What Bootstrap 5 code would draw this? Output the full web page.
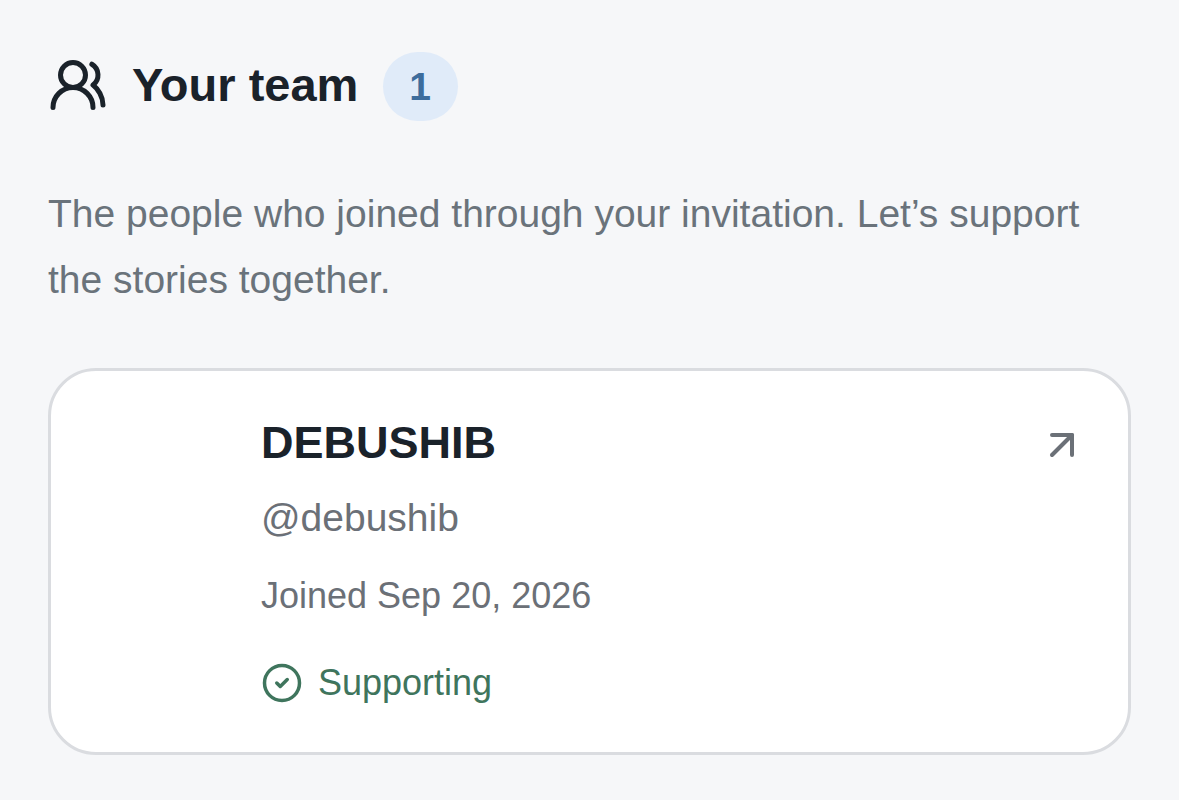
<!DOCTYPE html>
<html lang="en">
<head>
<meta charset="utf-8">
<meta name="viewport" content="width=device-width, initial-scale=1">
<title>Your team</title>
<link href="https://cdn.jsdelivr.net/npm/bootstrap@5.3.0/dist/css/bootstrap.min.css" rel="stylesheet">
<style>
body { background: #f6f7f9; color: #1a222a; font-family: "Liberation Sans", Arial, sans-serif; }
.team { padding: 52px 48px 45px; }
.team-head { gap: 25px; }
.team-title { font-size: 47px; line-height: 64px; font-weight: 700; gap: 24px; padding-bottom: 4px; }
.team-count { background: #e0ebf9; color: #3d6c9c; font-size: 39px; line-height: 39px; padding: 15px 27px 15px 26px; }
.team-intro { color: #6a737b; font-size: 39px; line-height: 66px; margin: 60px 0 55px; }
.member { border: 3px solid #dadce0; border-radius: 48px; padding: 39px 42px 42px 210px; }
.member-name { font-size: 45px; line-height: 66px; font-weight: 700; color: #1a222a; }
.member-handle { font-size: 39px; line-height: 60px; margin-top: 12px; }
.member-date { font-size: 36px; line-height: 54px; margin-top: 21px; }
.member-handle, .member-date, .member-arrow { color: #6b7077; }
.member-status { color: #3f755d; font-size: 36px; line-height: 54px; gap: 15px; margin-top: 33px; }
.member-arrow { margin-top: 11px; }
</style>
</head>
<body>
<main class="team">
  <header class="team-head d-flex align-items-center">
    <h1 class="team-title d-flex align-items-center mb-0">
      <svg width="60" height="60" viewBox="0 0 24 24" fill="none" stroke="currentColor" stroke-width="2" stroke-linecap="round" stroke-linejoin="round" aria-hidden="true"><path d="M18 21a8 8 0 0 0-16 0"/><circle cx="10" cy="8" r="5"/><path d="M22 20c0-3.37-2-6.5-4-8a5 5 0 0 0-.45-8.3"/></svg>
      Your team
    </h1>
    <span class="team-count rounded-pill fw-bold">1</span>
  </header>
  <p class="team-intro">The people who joined through your invitation. Let’s support the stories together.</p>
  <a href="#" class="member card flex-row justify-content-between align-items-start text-decoration-none">
    <div>
      <h2 class="member-name mb-0">DEBUSHIB</h2>
      <div class="member-handle">@debushib</div>
      <div class="member-date">Joined Sep 20, 2026</div>
      <div class="member-status d-flex align-items-center">
        <svg width="42" height="42" viewBox="0 0 24 24" fill="none" stroke="currentColor" stroke-width="2" stroke-linecap="round" stroke-linejoin="round" aria-hidden="true"><circle cx="12" cy="12" r="10"/><path d="m9 12 2 2 4-4"/></svg>
        Supporting
      </div>
    </div>
    <svg class="member-arrow flex-shrink-0" width="48" height="48" viewBox="0 0 24 24" fill="none" stroke="currentColor" stroke-width="2" stroke-linecap="round" stroke-linejoin="round" aria-hidden="true"><path d="M7 7h10v10"/><path d="M7 17 17 7"/></svg>
  </a>
</main>
<script src="https://cdn.jsdelivr.net/npm/bootstrap@5.3.0/dist/js/bootstrap.bundle.min.js"></script>
</body>
</html>
